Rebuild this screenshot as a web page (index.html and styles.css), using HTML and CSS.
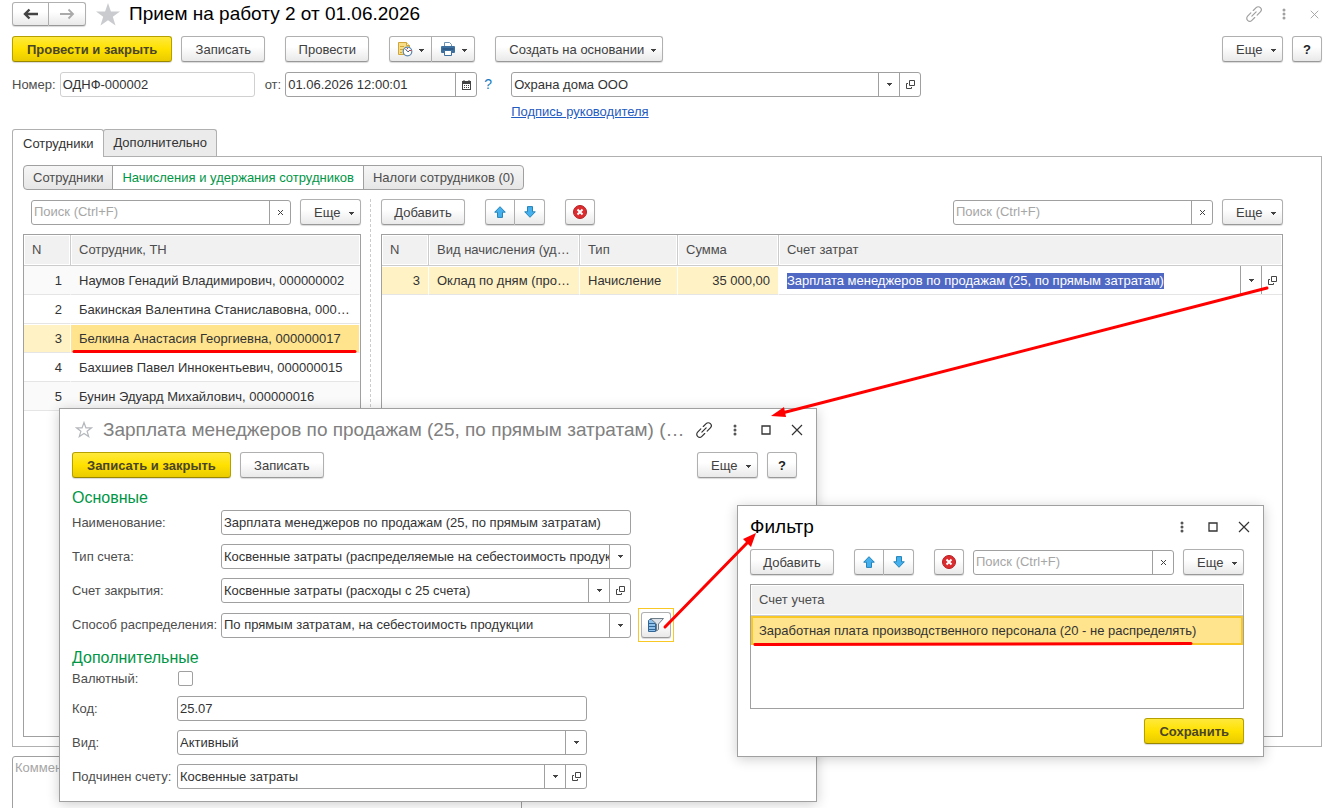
FILE: index.html
```html
<!DOCTYPE html>
<html lang="ru">
<head>
    <meta charset="UTF-8">
    <meta name="viewport" content="width=device-width, initial-scale=1.0">
    <title>Прием на работу 2 от 01.06.2026</title>
    <link rel="stylesheet" href="styles.css">
</head>
<body>
    <!-- общие значки -->
    <svg class="sprite" width="0" height="0" aria-hidden="true">
        <symbol id="i-caret" viewBox="0 0 5 3"><path d="M0 0h5v1H4v1H3v1H2V2H1V1H0z" fill="currentColor"/></symbol>
        <symbol id="i-open" viewBox="0 0 9 9"><path d="M3.500.5h5v5h-5zM2 3.500H.5v5h5V7" fill="none" stroke="currentColor"/></symbol>
        <symbol id="i-clear" viewBox="0 0 7 7"><path d="M1 1l5 5M6 1L1 6" fill="none" stroke="currentColor"/></symbol>
        <symbol id="i-dots" viewBox="0 0 4 12"><circle cx="2" cy="2" r="1.500"/><circle cx="2" cy="6" r="1.500"/><circle cx="2" cy="10" r="1.500"/></symbol>
        <symbol id="i-close" viewBox="0 0 12 12"><path d="M1 1l10 10M11 1L1 11" fill="none" stroke="currentColor" stroke-width="1.200"/></symbol>
        <symbol id="i-max" viewBox="0 0 10 10"><path d="M1 1h8v8H1z" fill="none" stroke="currentColor" stroke-width="1.300"/></symbol>
        <symbol id="i-link" viewBox="0 0 18 18"><g transform="rotate(-45 9 9)" fill="none" stroke="currentColor" stroke-width="1.200" stroke-linecap="round"><path d="M7.500 6H3a3 3 0 0 0 0 6h4M10.500 12H15a3 3 0 0 0 0-6H11M6 9h6"/></g></symbol>
        <symbol id="i-up" viewBox="0 0 12 12"><path d="M6 .7L11.300 6.200H8.500v5.200h-5V6.200H.7z" fill="#45b0ee" stroke="#2583b8"/></symbol>
        <symbol id="i-down" viewBox="0 0 12 12"><path d="M6 11.300L.7 5.800h2.800V.6h5v5.200h2.800z" fill="#45b0ee" stroke="#2583b8"/></symbol>
        <symbol id="i-del" viewBox="0 0 14 14"><circle cx="7" cy="7" r="6.500" fill="#dc2c2f" stroke="#b51f22"/><path d="M4.500 4.500l5 5M9.500 4.500l-5 5" stroke="#fff" stroke-width="2" fill="none"/></symbol>
    </svg>

    <div class="page">
        <header class="title-row">
            <div class="btn-group nav">
                <button class="btn" type="button" aria-label="Назад"><svg width="16" height="12" viewBox="0 0 16 12"><path d="M2 6h13M6.500 1.500L2 6l4.500 4.500" fill="none" stroke="#444" stroke-width="2.400"/></svg></button>
                <button class="btn" type="button" aria-label="Вперед"><svg width="16" height="12" viewBox="0 0 16 12"><path d="M1 6h13M9.500 1.500L14 6l-4.500 4.500" fill="none" stroke="#aaa" stroke-width="1.800"/></svg></button>
            </div>
            <svg class="star" width="24" height="23" viewBox="0 0 24 23"><path d="M12 0l2.900 8.500H24l-7.200 5.300 2.700 8.700L12 17.200l-7.500 5.300 2.700-8.700L0 8.500h9.100z" fill="#c9cbce"/></svg>
            <h1>Прием на работу 2 от 01.06.2026</h1>
            <div class="win-icons main-icons">
                <svg width="18" height="18"><use href="#i-link"/></svg>
                <svg width="4" height="12"><use href="#i-dots"/></svg>
                <svg width="9" height="9"><use href="#i-close"/></svg>
            </div>
        </header>

        <div class="toolbar main-toolbar">
            <button class="btn primary" type="button">Провести и закрыть</button>
            <button class="btn wide" type="button">Записать</button>
            <button class="btn wide apart" type="button">Провести</button>
            <div class="btn-group apart">
                <button class="btn icon-menu" type="button" aria-label="Отчеты">
                    <svg width="16" height="16" viewBox="0 0 16 16"><path d="M1.500 1.500h8l3 3v9h-11z" fill="#f7dd85" stroke="#cfa63b"/><path d="M9.500 1.500v3h3" fill="#fff2c4" stroke="#cfa63b"/><path d="M3 5.500h4M3 8.500h4M3 11.500h2" stroke="#cfa63b"/><circle cx="10.500" cy="10.500" r="4.300" fill="#fff" stroke="#5c86ad" stroke-width="1.200"/><path d="M10.500 10.500L8.500 8M10.500 10.500h1.500" stroke="#335d85"/><path d="M12 9.500h2M10 7.500h1" stroke="#e03030"/></svg>
                    <svg class="caret" width="5" height="3"><use href="#i-caret"/></svg>
                </button>
                <button class="btn icon-menu" type="button" aria-label="Печать">
                    <svg width="16" height="16" viewBox="0 0 16 16"><path d="M4.500 6V1.500h5l2 2V6" fill="#fff" stroke="#6e93b5"/><rect x="1" y="5" width="14" height="7" rx="1" fill="#3d6f9f"/><path d="M2.500 8h11" stroke="#1e466e"/><path d="M4.500 9.500h7v5h-7z" fill="#fff" stroke="#3d6f9f"/></svg>
                    <svg class="caret" width="5" height="3"><use href="#i-caret"/></svg>
                </button>
            </div>
            <button class="btn apart create" type="button">Создать на основании<svg class="caret" width="5" height="3"><use href="#i-caret"/></svg></button>
            <button class="btn more push" type="button">Еще<svg class="caret" width="5" height="3"><use href="#i-caret"/></svg></button>
            <button class="btn help" type="button">?</button>
        </div>

        <div class="doc-fields">
            <label for="doc-number">Номер:</label>
            <div class="field number disabled"><input type="text" id="doc-number" value="ОДНФ-000002"></div>
            <label for="doc-date">от:</label>
            <div class="field date">
                <input type="text" id="doc-date" value="01.06.2026 12:00:01">
                <button type="button" aria-label="Календарь"><svg width="9" height="10" viewBox="0 0 9 10"><path d="M0 1h9v9H0z" fill="#444"/><path d="M2 0v2M7 0v2" stroke="#444"/><path d="M1 4h7v5H1z" fill="#fff"/><path d="M2 5.500h5M2 7.500h5" stroke="#444" stroke-dasharray="1 1"/></svg></button>
            </div>
            <a class="question" href="#">?</a>
            <div class="org">
                <div class="field">
                    <select aria-label="Организация"><option>Охрана дома ООО</option></select>
                    <button type="button" aria-label="Выбрать"><svg width="5" height="3"><use href="#i-caret"/></svg></button>
                    <button type="button" aria-label="Открыть"><svg width="9" height="9"><use href="#i-open"/></svg></button>
                </div>
                <a href="#">Подпись руководителя</a>
            </div>
        </div>

        <nav class="tabs">
            <button class="tab active" type="button">Сотрудники</button>
            <button class="tab" type="button">Дополнительно</button>
        </nav>

        <main class="panel">
            <div class="segments">
                <button type="button">Сотрудники</button>
                <button class="active" type="button">Начисления и удержания сотрудников</button>
                <button type="button">Налоги сотрудников (0)</button>
            </div>
            <div class="columns">
                <section class="employees">
                    <div class="toolbar">
                        <div class="field search">
                            <input type="text" placeholder="Поиск (Ctrl+F)" aria-label="Поиск сотрудника">
                            <button type="button" aria-label="Очистить"><svg width="7" height="7"><use href="#i-clear"/></svg></button>
                        </div>
                        <button class="btn more" type="button">Еще<svg class="caret" width="5" height="3"><use href="#i-caret"/></svg></button>
                    </div>
                    <div class="table-box">
                        <table>
                            <colgroup><col class="col-n"><col></colgroup>
                            <thead><tr><th>N</th><th>Сотрудник, ТН</th></tr></thead>
                            <tbody>
                                <tr><td class="num">1</td><td>Наумов Генадий Владимирович, 000000002</td></tr>
                                <tr><td class="num">2</td><td>Бакинская Валентина Станиславовна, 000…</td></tr>
                                <tr class="selected"><td class="num">3</td><td class="current">Белкина Анастасия Георгиевна, 000000017</td></tr>
                                <tr><td class="num">4</td><td>Бахшиев Павел Иннокентьевич, 000000015</td></tr>
                                <tr><td class="num">5</td><td>Бунин Эдуард Михайлович, 000000016</td></tr>
                            </tbody>
                        </table>
                    </div>
                </section>
                <div class="splitter"></div>
                <section class="accruals">
                    <div class="toolbar">
                        <button class="btn wide" type="button">Добавить</button>
                        <div class="btn-group apart">
                            <button class="btn icon" type="button" aria-label="Вверх"><svg width="12" height="12"><use href="#i-up"/></svg></button>
                            <button class="btn icon" type="button" aria-label="Вниз"><svg width="12" height="12"><use href="#i-down"/></svg></button>
                        </div>
                        <button class="btn icon apart" type="button" aria-label="Удалить"><svg width="14" height="14"><use href="#i-del"/></svg></button>
                        <div class="field search push">
                            <input type="text" placeholder="Поиск (Ctrl+F)" aria-label="Поиск начисления">
                            <button type="button" aria-label="Очистить"><svg width="7" height="7"><use href="#i-clear"/></svg></button>
                        </div>
                        <button class="btn more" type="button">Еще<svg class="caret" width="5" height="3"><use href="#i-caret"/></svg></button>
                    </div>
                    <div class="table-box">
                        <table>
                            <colgroup><col class="col-n"><col class="col-kind"><col class="col-type"><col class="col-sum"><col></colgroup>
                            <thead><tr><th>N</th><th>Вид начисления (уд…</th><th>Тип</th><th>Сумма</th><th>Счет затрат</th></tr></thead>
                            <tbody>
                                <tr class="selected">
                                    <td class="num">3</td>
                                    <td>Оклад по дням (про…</td>
                                    <td>Начисление</td>
                                    <td class="num">35 000,00</td>
                                    <td class="edit">
                                        <div class="cell-field">
                                            <input type="text" id="cost-account" aria-label="Счет затрат" value="Зарплата менеджеров по продажам (25, по прямым затратам)">
                                            <button type="button" aria-label="Выбрать"><svg width="5" height="3"><use href="#i-caret"/></svg></button>
                                            <button type="button" aria-label="Открыть"><svg width="9" height="9"><use href="#i-open"/></svg></button>
                                        </div>
                                    </td>
                                </tr>
                            </tbody>
                        </table>
                    </div>
                </section>
            </div>
        </main>

        <footer class="comment">
            <textarea placeholder="Комментарий" aria-label="Комментарий"></textarea>
        </footer>
    </div>

    <!-- карточка счета -->
    <section class="window account">
        <header class="window-title">
            <svg class="star-small" width="18" height="17" viewBox="0 0 18 17"><path d="M9 1.500l1.900 5.300h5.600l-4.400 3.400 1.600 5.400L9 12.400l-4.700 3.200 1.600-5.400L1.500 6.800h5.600z" fill="none" stroke="#b5b8bd" stroke-width="1.200"/></svg>
            <h2>Зарплата менеджеров по продажам (25, по прямым затратам) (…</h2>
            <div class="win-icons">
                <svg width="18" height="18"><use href="#i-link"/></svg>
                <svg width="4" height="12"><use href="#i-dots"/></svg>
                <svg width="10" height="10"><use href="#i-max"/></svg>
                <svg width="12" height="12"><use href="#i-close"/></svg>
            </div>
        </header>
        <div class="toolbar">
            <button class="btn primary" type="button">Записать и закрыть</button>
            <button class="btn wide" type="button">Записать</button>
            <button class="btn more push" type="button">Еще<svg class="caret" width="5" height="3"><use href="#i-caret"/></svg></button>
            <button class="btn help" type="button">?</button>
        </div>
        <h3>Основные</h3>
        <div class="form main-form">
            <label for="acc-name">Наименование:</label>
            <div class="field"><input type="text" id="acc-name" value="Зарплата менеджеров по продажам (25, по прямым затратам)"></div>
            <label for="acc-type">Тип счета:</label>
            <div class="field">
                <select id="acc-type"><option>Косвенные затраты (распределяемые на себестоимость продукции)</option></select>
                <button type="button" aria-label="Выбрать"><svg width="5" height="3"><use href="#i-caret"/></svg></button>
            </div>
            <label for="acc-close">Счет закрытия:</label>
            <div class="field">
                <select id="acc-close"><option>Косвенные затраты (расходы с 25 счета)</option></select>
                <button type="button" aria-label="Выбрать"><svg width="5" height="3"><use href="#i-caret"/></svg></button>
                <button type="button" aria-label="Открыть"><svg width="9" height="9"><use href="#i-open"/></svg></button>
            </div>
            <label for="acc-method">Способ распределения:</label>
            <div class="field">
                <select id="acc-method"><option>По прямым затратам, на себестоимость продукции</option></select>
                <button type="button" aria-label="Выбрать"><svg width="5" height="3"><use href="#i-caret"/></svg></button>
            </div>
            <div class="focus-frame">
                <button class="btn icon" type="button" aria-label="Фильтр"><svg width="18" height="17" viewBox="0 0 18 17"><path d="M1.500 3.500l1-1h6v12h-7z" fill="#8fc1ea" stroke="#326795"/><path d="M2 6.500h7M2 9.500h7M2 12.500h7" stroke="#326795"/><path d="M3.500 1.500h13L11.500 7v5.500l-2 1.500V7z" fill="#dde3e8" stroke="#6f7d89"/></svg></button>
            </div>
        </div>
        <h3>Дополнительные</h3>
        <div class="form extra-form">
            <label for="acc-currency">Валютный:</label>
            <input type="checkbox" id="acc-currency">
            <label for="acc-code">Код:</label>
            <div class="field"><input type="text" id="acc-code" value="25.07"></div>
            <label for="acc-kind">Вид:</label>
            <div class="field">
                <select id="acc-kind"><option>Активный</option></select>
                <button type="button" aria-label="Выбрать"><svg width="5" height="3"><use href="#i-caret"/></svg></button>
            </div>
            <label for="acc-parent">Подчинен счету:</label>
            <div class="field">
                <select id="acc-parent"><option>Косвенные затраты</option></select>
                <button type="button" aria-label="Выбрать"><svg width="5" height="3"><use href="#i-caret"/></svg></button>
                <button type="button" aria-label="Открыть"><svg width="9" height="9"><use href="#i-open"/></svg></button>
            </div>
        </div>
    </section>

    <!-- окно фильтра -->
    <section class="window filter">
        <header class="window-title">
            <h2>Фильтр</h2>
            <div class="win-icons">
                <svg width="4" height="12"><use href="#i-dots"/></svg>
                <svg width="10" height="10"><use href="#i-max"/></svg>
                <svg width="12" height="12"><use href="#i-close"/></svg>
            </div>
        </header>
        <div class="toolbar">
            <button class="btn wide" type="button">Добавить</button>
            <div class="btn-group apart">
                <button class="btn icon" type="button" aria-label="Вверх"><svg width="12" height="12"><use href="#i-up"/></svg></button>
                <button class="btn icon" type="button" aria-label="Вниз"><svg width="12" height="12"><use href="#i-down"/></svg></button>
            </div>
            <button class="btn icon apart" type="button" aria-label="Удалить"><svg width="14" height="14"><use href="#i-del"/></svg></button>
            <div class="field search">
                <input type="text" placeholder="Поиск (Ctrl+F)" aria-label="Поиск счета">
                <button type="button" aria-label="Очистить"><svg width="7" height="7"><use href="#i-clear"/></svg></button>
            </div>
            <button class="btn more" type="button">Еще<svg class="caret" width="5" height="3"><use href="#i-caret"/></svg></button>
        </div>
        <div class="table-box">
            <table>
                <thead><tr><th>Счет учета</th></tr></thead>
                <tbody><tr><td class="framed">Заработная плата производственного персонала (20 - не распределять)</td></tr></tbody>
            </table>
        </div>
        <div class="actions"><button class="btn primary" type="button">Сохранить</button></div>
    </section>

    <!-- красные пометки поверх окон -->
    <svg class="marks" width="1326" height="808" viewBox="0 0 1326 808" aria-hidden="true">
        <g fill="none" stroke="#f00" stroke-width="3" stroke-linecap="round">
            <path d="M74 351.500h281"/>
            <path d="M755 644.500L1191 643.500"/>
            <path d="M1267 288L782 413"/>
            <path d="M665 627L748 542"/>
        </g>
        <path d="M771 416l13-9 2 10z" fill="#f00"/>
        <path d="M756 533l-5 14-8-8z" fill="#f00"/>
    </svg>

    <script>
        // ячейка открыта на редактирование, текст выделен целиком
        const costAccount = document.getElementById('cost-account');
        costAccount.focus();
        costAccount.select();
    </script>
</body>
</html>
```
FILE: styles.css
```css
* {
    box-sizing: border-box;
}
body {
    margin: 0;
    font-family: "Liberation Sans", Arial, sans-serif;
    font-size: 13px;
    line-height: 16px;
    color: #4d4d4d;
    background-color: #fff;
    overflow: hidden;
}
button, input, select, textarea {
    font: inherit;
    color: inherit;
    margin: 0;
}
button {
    cursor: pointer;
}
h1, h2, h3 {
    margin: 0;
    font-weight: normal;
}
svg {
    display: block;
    flex: none;
}
.sprite {
    position: absolute;
}
.page {
    display: flex;
    flex-direction: column;
    height: 100vh;
    padding: 2px 4px 0 12px;
}

/* шапка */
.title-row {
    display: flex;
    align-items: center;
    height: 24px;
}
.title-row .star {
    margin: 0 9px 0 10px;
}
h1, h2 {
    font-size: 19px;
    line-height: 24px;
    color: #000;
}
.win-icons {
    display: grid;
    grid-auto-flow: column;
    grid-auto-columns: 31px;
    align-items: center;
    justify-items: center;
    margin: 0 -15px 0 auto;
    color: #333;
    fill: #555;
}
.main-icons {
    grid-auto-columns: 30px;
    margin-right: -7px;
    color: #a0a0a0;
    fill: #a0a0a0;
}

/* кнопки */
.toolbar {
    display: flex;
    align-items: center;
    gap: 9px;
}
.main-toolbar {
    margin: 10px 0;
}
.btn {
    display: flex;
    align-items: center;
    justify-content: center;
    height: 26px;
    padding: 1px 12px 0;
    border: 1px solid #b0b0b0;
    border-bottom-color: #989898;
    border-radius: 3px;
    background: linear-gradient(#fff 40%, #e9e9e9);
    box-shadow: 0 1px 1px rgba(0,0,0,0.15);
    color: #404040;
    white-space: nowrap;
}
.btn.primary {
    padding: 1px 14px 0;
    border-color: #b5a000;
    border-bottom-color: #998700;
    background: linear-gradient(#ffe93c, #ffe100 50%, #eacb00);
    font-weight: bold;
    color: #4a4528;
}
.btn.wide {
    min-width: 84px;
}
.btn.more {
    width: 61px;
    padding: 1px 6px 0 13px;
    justify-content: space-between;
}
.btn.create {
    gap: 7px;
    padding: 1px 6px 0 13px;
}
.btn.help {
    width: 30px;
    padding: 1px 0 0;
    font-weight: bold;
    color: #222;
}
.btn.icon {
    width: 30px;
    padding: 0;
}
.btn.icon-menu {
    width: 43px;
    gap: 6px;
    padding: 0;
}
.caret {
    margin-top: 2px;
}
.btn-group {
    display: flex;
}
.btn-group .btn + .btn {
    border-left: 0;
    border-radius: 0 3px 3px 0;
}
.btn-group .btn:first-child {
    border-radius: 3px 0 0 3px;
}
.nav .btn {
    width: 37px;
    height: 24px;
    padding: 0;
}
.apart {
    margin-left: 11px;
}
.push {
    margin-left: auto;
}

/* поля ввода */
.field {
    display: flex;
    height: 25px;
    border: 1px solid #a0a0a0;
    border-radius: 3px;
    background-color: #fff;
    color: #333;
    overflow: hidden;
}
.field.disabled {
    border-color: #d0d0d0;
}
.field input, .field select, .cell-field input {
    flex: 1;
    min-width: 0;
    padding: 0 0 0 2px;
    border: 0;
    outline: 0;
    background: none;
}
.field select {
    appearance: none;
}
.field button, .cell-field button {
    display: flex;
    align-items: center;
    justify-content: center;
    width: 21px;
    padding: 0;
    border: 0;
    border-left: 1px solid #a0a0a0;
    background: none;
    color: #444;
}
::placeholder {
    color: #a6a6a6;
}
::selection {
    background-color: #4f68c4;
    color: #fff;
}
.doc-fields {
    display: flex;
    align-items: flex-start;
    line-height: 25px;
}
.doc-fields .number {
    width: 195px;
    margin: 0 10px 0 4px;
}
.doc-fields .date {
    width: 192px;
    margin: 0 7px 0 4px;
}
.question {
    width: 27px;
    color: #1a7bc0;
    font-size: 14px;
    text-decoration: none;
}
.org {
    width: 410px;
    line-height: 18px;
}
.org .field {
    margin-bottom: 6px;
}
.org a {
    display: block;
    color: #1f5bc0;
}

/* закладки */
.tabs {
    display: flex;
    margin-top: 8px;
}
.tab {
    height: 27px;
    padding: 0 10px;
    border: 1px solid #b0b0b0;
    border-bottom: 0;
    border-radius: 3px 3px 0 0;
    background-color: #ebebeb;
    color: #333;
}
.tab + .tab {
    margin-left: -1px;
    padding: 0 9px;
}
.tab.active {
    height: 28px;
    margin-bottom: -1px;
    background-color: #fff;
    z-index: 1;
}
.panel {
    flex: 1;
    min-height: 0;
    display: flex;
    flex-direction: column;
    padding: 8px 38px 9px 10px;
    border: 1px solid #b0b0b0;
}
.segments {
    display: flex;
    height: 25px;
    margin-bottom: 9px;
}
.segments button {
    padding: 0 9px;
    border: 1px solid #a0a0a0;
    background: linear-gradient(#f6f6f6, #e6e6e6);
}
.segments button + button {
    margin-left: -1px;
}
.segments button:first-child {
    border-radius: 4px 0 0 4px;
}
.segments button:last-child {
    border-radius: 0 4px 4px 0;
}
.segments .active {
    background: #fff;
    color: #009646;
}
.columns {
    flex: 1;
    min-height: 0;
    display: flex;
}
.employees, .accruals {
    display: flex;
    flex-direction: column;
    gap: 9px;
}
.employees {
    width: 338px;
}
.employees .toolbar {
    padding-left: 8px;
}
.employees .search {
    flex: 1;
}
.accruals {
    flex: 1;
    min-width: 0;
}
.accruals .search {
    width: 260px;
}
.splitter {
    margin: 0 10px 0 9px;
    border-left: 1px dashed #ccc;
}

/* таблицы */
.table-box {
    flex: 1;
    min-height: 0;
    border: 1px solid #a0a0a0;
    overflow: hidden;
}
table {
    width: 100%;
    table-layout: fixed;
    border-collapse: separate;
    border-spacing: 0;
}
.col-n {
    width: 47px;
}
.col-kind {
    width: 151px;
}
.col-type {
    width: 98px;
}
.col-sum {
    width: 101px;
}
th, td {
    padding: 0 8px;
    text-align: left;
    font-weight: normal;
    white-space: nowrap;
    overflow: hidden;
    text-overflow: ellipsis;
}
th {
    height: 31px;
    border-right: 1px solid #ccc;
    border-bottom: 1px solid #ccc;
    background-color: #f1f1f1;
    box-shadow: inset 0 0 0 1px #fff;
}
th:last-child {
    border-right: 0;
}
td {
    height: 29px;
    padding-top: 2px;
    border-right: 1px solid transparent;
    border-bottom: 1px solid #e5e5e5;
    color: #333;
}
tr:nth-child(odd) td {
    background-color: #fafafa;
}
.num {
    text-align: right;
}
tr.selected td {
    background-color: #fff2c5;
    background-clip: padding-box;
    box-shadow: inset 0 1px #fff;
}
tr.selected td.current {
    background-color: #ffe48d;
}
tr.selected td.edit {
    padding: 0;
    background-color: #fff;
    border-right: 0;
}
.cell-field {
    display: flex;
    height: 28px;
}
.cell-field input {
    padding: 1px 8px 0;
}
tr td.framed {
    border: 2px solid #f9c825;
    background-color: #ffe48d;
    padding: 0 6px;
}
.comment {
    height: 52px;
    margin-top: 9px;
    overflow: hidden;
}
.comment textarea {
    display: block;
    width: 510px;
    height: 80px;
    padding: 3px 2px;
    border: 1px solid #a0a0a0;
    border-radius: 3px;
    resize: none;
}

/* окна */
.window {
    position: absolute;
    padding: 0 19px 12px 12px;
    border: 1px solid #a0a0a0;
    background-color: #fff;
    box-shadow: 0 2px 12px rgba(0,0,0,0.2);
}
.window-title {
    display: flex;
    align-items: center;
    height: 43px;
    padding-bottom: 2px;
}
.window-title h2 {
    white-space: nowrap;
}
.account {
    left: 59px;
    top: 408px;
    width: 758px;
}
.account h2 {
    color: #808080;
}
.star-small {
    margin: 0 10px 0 3px;
}
.account h3 {
    margin: 10px 0 2px;
    font-size: 16px;
    line-height: 20px;
    color: #009646;
}
.form {
    display: grid;
    align-items: center;
    row-gap: 9px;
}
.main-form {
    grid-template-columns: 149px 410px 36px;
}
.main-form label {
    grid-column: 1;
}
.extra-form {
    grid-template-columns: 105px 410px;
}
.focus-frame {
    margin: -4px -7px -4px 7px;
    padding: 3px 2px;
    border: 1px solid #f9c825;
    width: 36px;
}
.form input[type="checkbox"] {
    appearance: none;
    width: 15px;
    height: 15px;
    margin: 1px;
    border: 1px solid #a0a0a0;
    border-radius: 2px;
}
.filter {
    left: 737px;
    top: 505px;
    width: 527px;
}
.filter .search {
    flex: 1;
}
.filter .table-box {
    height: 125px;
    margin: 9px 0;
}
.actions {
    display: flex;
    justify-content: flex-end;
}
.marks {
    position: absolute;
    left: 0;
    top: 0;
    pointer-events: none;
}
```
